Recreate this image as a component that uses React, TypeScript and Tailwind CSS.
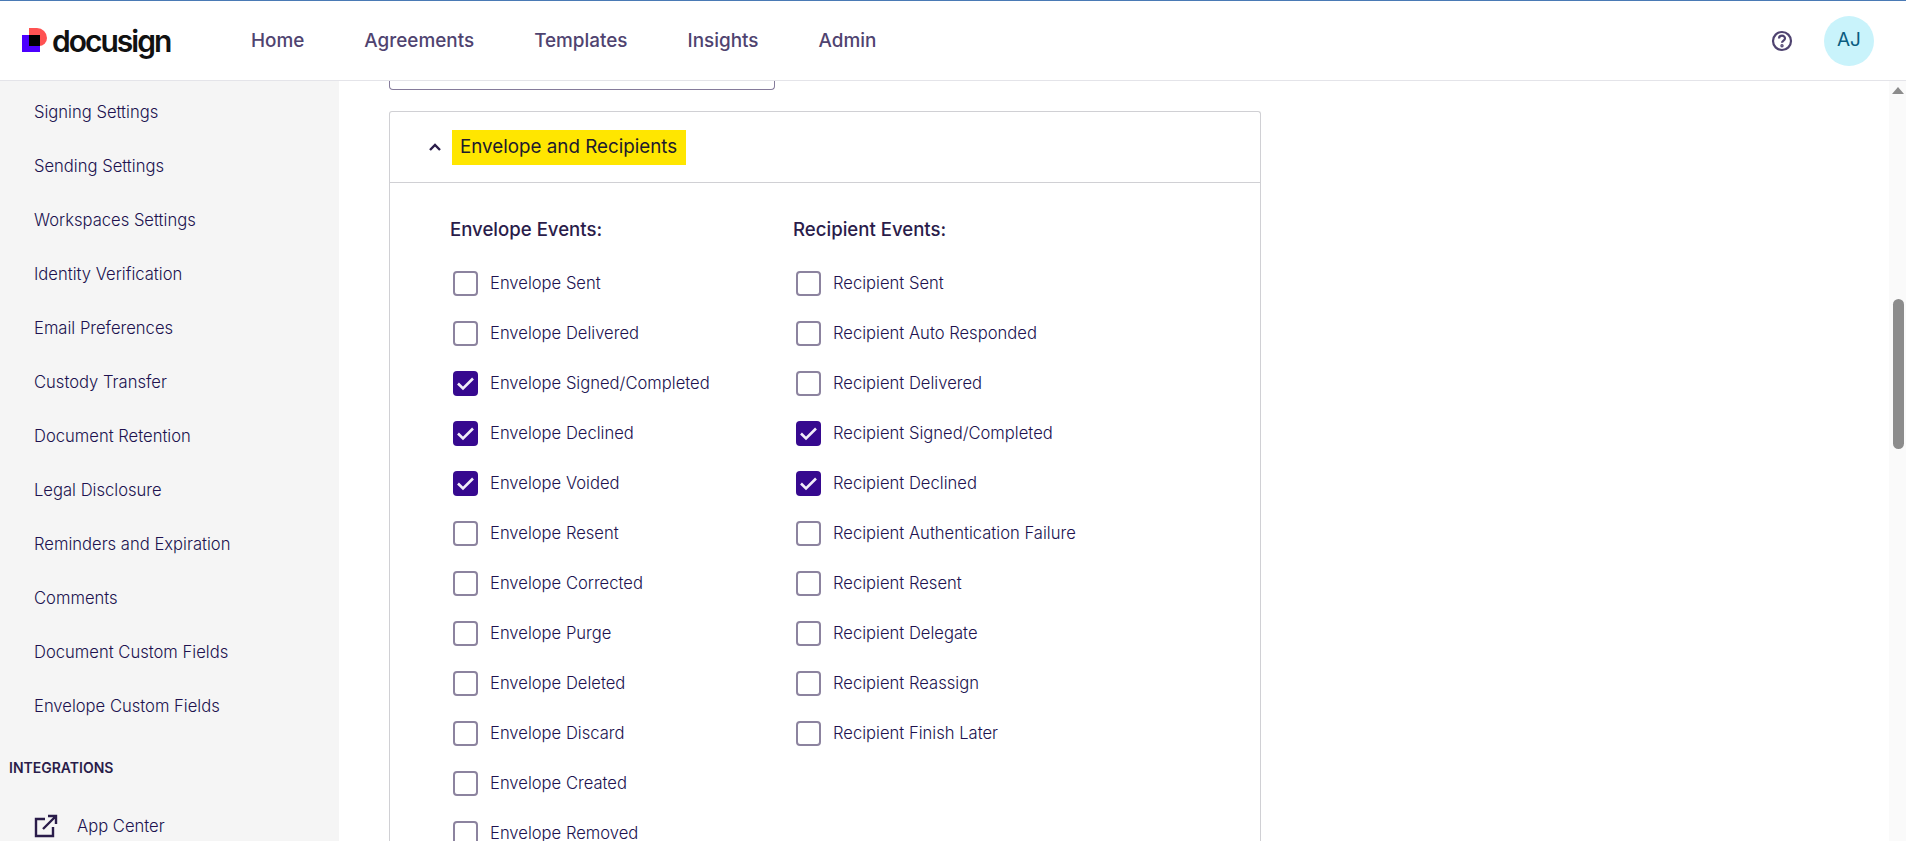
import React from "react";

const sideItems = ["Signing Settings","Sending Settings","Workspaces Settings","Identity Verification","Email Preferences","Custody Transfer","Document Retention","Legal Disclosure","Reminders and Expiration","Comments","Document Custom Fields","Envelope Custom Fields"];
const envelope: [string, boolean][] = [["Envelope Sent",false],["Envelope Delivered",false],["Envelope Signed/Completed",true],["Envelope Declined",true],["Envelope Voided",true],["Envelope Resent",false],["Envelope Corrected",false],["Envelope Purge",false],["Envelope Deleted",false],["Envelope Discard",false],["Envelope Created",false],["Envelope Removed",false]];
const recipient: [string, boolean][] = [["Recipient Sent",false],["Recipient Auto Responded",false],["Recipient Delivered",false],["Recipient Signed/Completed",true],["Recipient Declined",true],["Recipient Authentication Failure",false],["Recipient Resent",false],["Recipient Delegate",false],["Recipient Reassign",false],["Recipient Finish Later",false]];

function Row({ label, checked }: { label: string; checked: boolean }) {
  return (
    <div className="flex h-[50px] shrink-0 items-center">
      {checked ? (
        <span className="ml-[3px] flex h-[25px] w-[25px] items-center justify-center rounded-[4px] bg-[#36098f]">
          <svg width="19" height="19" viewBox="0 0 19 19" fill="none"><path d="M2 9.5l5 5L17 4.5" stroke="#f1edf8" strokeWidth="2.6" /></svg>
        </span>
      ) : (
        <span className="ml-[3px] h-[25px] w-[25px] rounded-[4px] border-2 border-[#8c839f] bg-white" />
      )}
      <span className="ml-3 text-[16.6px] font-light text-[#20124f]">{label}</span>
    </div>
  );
}

function Column({ title, items, width }: { title: string; items: [string, boolean][]; width: string }) {
  return (
    <div className={`flex flex-col ${width}`}>
      <div className="mb-[16px] flex h-[24px] items-center text-[18.6px] font-medium text-[#2a1c4a]">{title}</div>
      {items.map(([l, c]) => <Row key={l} label={l} checked={c} />)}
    </div>
  );
}

export default function App() {
  return (
    <div className="flex h-[841px] w-[1906px] flex-col overflow-hidden bg-white font-['Inter','Lato',sans-serif]">
      <header className="flex h-[81px] shrink-0 items-center border-t border-b border-t-[#4a7ab5] border-b-[#e4e4e9] bg-white">
        <div className="ml-[22px] flex w-[229px] items-center">
          <svg width="25" height="25" viewBox="0 0 25 25">
            <path d="M7 0h8a10 10 0 0 1 10 10 8 8 0 0 1-8 8H7z" fill="#ff5252" />
            <rect x="0" y="7" width="18" height="17" fill="#4c00ff" />
            <rect x="7" y="7" width="11" height="11" fill="#000" />
          </svg>
          <span className="ml-[5px] text-[30px] font-semibold leading-none tracking-[-2px] text-[#111]">docusign</span>
        </div>
        <nav className="mt-[2px] flex items-center gap-[60px] text-[18.9px] font-medium text-[#4f4370]">
          <span>Home</span><span>Agreements</span><span>Templates</span><span>Insights</span><span>Admin</span>
        </nav>
        <div className="ml-auto flex items-center">
          <svg width="22" height="22" viewBox="0 0 22 22" fill="none" stroke="#4f4370" strokeWidth="2.2">
            <circle cx="11" cy="11" r="9" />
            <path d="M8 8.6a3 3 0 0 1 6 0c0 2-3 2.2-3 4.2" />
            <circle cx="11" cy="15.8" r="0.6" fill="#4f4370" />
          </svg>
          <div className="ml-[31px] mr-[32px] flex h-[50px] w-[50px] items-center justify-center rounded-full bg-[#c9f3fb] text-[19px] text-[#0b5c80]">AJ</div>
        </div>
      </header>
      <div className="flex min-h-0 flex-1">
        <aside className="flex w-[339px] shrink-0 flex-col overflow-hidden bg-[#f5f5f5] text-[16.6px] font-light text-[#20124f]">
          <div className="flex flex-col pt-[4px]">
            {sideItems.map((s) => <div key={s} className="flex h-[54px] items-center pl-[34px]">{s}</div>)}
          </div>
          <div className="mt-[24px] pl-[9px] text-[14px] font-semibold text-[#2a1c4a]">INTEGRATIONS</div>
          <div className="mt-[36px] flex items-center pl-[34px]">
            <svg width="24" height="24" viewBox="0 0 24 24" fill="none" stroke="#2a1c4a" strokeWidth="2.4">
              <path d="M11 5H2v17h17v-9" />
              <path d="M9 15L22 2M14 2h8v8" />
            </svg>
            <span className="ml-[19px]">App Center</span>
          </div>
        </aside>
        <main className="min-w-0 flex-1 pl-[50px]">
          <div className="h-[9px] w-[386px] rounded-b-[4px] border-x border-b border-[#857b9b]" />
          <section className="mt-[21px] w-[872px] rounded-t-[3px] border-x border-t border-[#d0d0d4]">
            <div className="flex h-[71px] items-center border-b border-[#d0d0d4] pl-[38px]">
              <svg width="14" height="10" viewBox="0 0 14 10" fill="none"><path d="M2 8l5-5 5 5" stroke="#2a1c4a" strokeWidth="2.4" /></svg>
              <span className="ml-[10px] flex h-[35px] items-center bg-[#ffe600] pl-2 pr-[9px] text-[18.8px] font-normal text-[#201a2c]">Envelope and Recipients</span>
            </div>
            <div className="flex pl-[60px] pt-[35px]">
              <Column title="Envelope Events:" items={envelope} width="w-[343px]" />
              <Column title="Recipient Events:" items={recipient} width="w-[400px]" />
            </div>
          </section>
        </main>
        <div className="flex w-[17px] shrink-0 flex-col items-center bg-[#fafafa]">
          <div className="mt-[6px] h-0 w-0 border-x-[6px] border-b-[7px] border-x-transparent border-b-[#8c8c8c]" />
          <div className="ml-[2px] mt-[205px] h-[150px] w-[11px] rounded-full bg-[#8c8c8c]" />
        </div>
      </div>
    </div>
  );
}
